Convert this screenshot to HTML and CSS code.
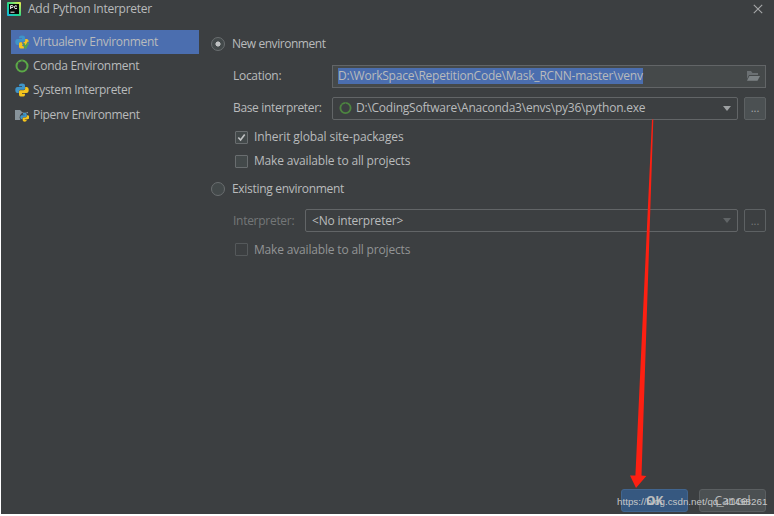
FILE: index.html
```html
<!DOCTYPE html>
<html lang="en">
<head>
<meta charset="utf-8">
<title>Add Python Interpreter</title>
<link rel="stylesheet" href="styles.css">
</head>
<body>
<svg class="defs" width="0" height="0">
  <defs>
    <symbol id="python" viewBox="0 0 14 14">
      <path fill="#3f94c8" d="M4 2.6Q4 .4 7 .4T10 2.6V5.4Q10 6.8 8.6 6.8H5.4Q3.8 6.8 3.8 8.5V10H2.6Q.3 10 .3 7T2.6 4H7V3.3H4Z"/>
      <path fill="#f5c51d" d="M10 11.4Q10 13.6 7 13.6T4 11.4V8.6Q4 7.2 5.4 7.2H8.6Q10.2 7.2 10.2 5.5V4H11.4Q13.7 4 13.7 7T11.4 10H7V10.7H10Z"/>
    </symbol>
    <symbol id="conda" viewBox="0 0 14 14">
      <circle cx="7" cy="7" r="5.5" fill="none" stroke="currentColor" stroke-width="2"/>
      <path d="M2.5 2.5 5 5M7 1v2" stroke="#3c3f41" stroke-width=".5"/>
    </symbol>
  </defs>
</svg>
<div class="dialog">
  <header class="titlebar">
    <svg class="app-icon" viewBox="0 0 14 14">
      <defs><linearGradient id="logo" x1="0" y1="1" x2="1" y2="0"><stop offset="0" stop-color="#12b5e8"/><stop offset=".45" stop-color="#21d789"/><stop offset="1" stop-color="#f4ee4c"/></linearGradient></defs>
      <rect width="14" height="14" rx="1" fill="url(#logo)"/>
      <rect x="2" y="2" width="10" height="10" fill="#080808"/>
      <path d="M3.6 7V3.6H5Q6.2 3.6 6.2 4.6T5 5.6H3.8M10 4.2Q7.4 2.8 7.4 5.2T10 6.3M3.5 10.2h4" fill="none" stroke="#eee" stroke-width="1"/>
    </svg>
    <h1 class="title">Add Python Interpreter</h1>
    <svg class="close" viewBox="0 0 10 10"><path d="M.8.8 9.2 9.2M9.2.8.8 9.2" stroke="#a6a8a9" stroke-width="1.1"/></svg>
  </header>
  <div class="content">
    <nav class="sidebar">
      <div class="nav-item selected">
        <svg class="icon" viewBox="0 0 14 14"><use href="#python"/><path d="M7.5 7.2 10 13 13.5 6.8" fill="none" stroke="#4b6eaf" stroke-width="1.6"/><path d="M8.8 8.2 10.6 12.8 13.3 8" fill="none" stroke="#55a847" stroke-width="1.7"/></svg>
        <span class="t-virtualenv">Virtualenv Environment</span>
      </div>
      <div class="nav-item"><svg class="icon conda"><use href="#conda"/></svg><span class="t-conda">Conda Environment</span></div>
      <div class="nav-item"><svg class="icon"><use href="#python"/></svg><span class="t-system">System Interpreter</span></div>
      <div class="nav-item">
        <svg class="icon" viewBox="0 0 14 14"><path d="M0 2H5L7 4H13V12H0Z" fill="#87939a"/><circle cx="9.7" cy="9.3" r="5" fill="#3c3f41"/><use href="#python" x="5" y="4.6" width="9.4" height="9.4"/></svg>
        <span class="t-pipenv">Pipenv Environment</span>
      </div>
    </nav>
    <main class="form">
      <div class="row radio-row"><span class="radio checked"></span><span class="t-new">New environment</span></div>
      <div class="row field-row location-row">
        <span class="label t-location">Location:</span>
        <div class="input"><span class="selection t-path">D:\WorkSpace\RepetitionCode\Mask_RCNN-master\venv</span>
          <svg class="folder" viewBox="0 0 14 12"><path d="M1 9V1H5L6.5 3H12V5H3Z" fill="#6b7073"/><path d="M3.4 6H14L11.5 10.8H1Z" fill="#7c8285"/></svg>
        </div>
      </div>
      <div class="row field-row base-row">
        <span class="label t-base">Base interpreter:</span>
        <div class="combo"><svg class="icon conda"><use href="#conda"/></svg><span class="t-exe">D:\CodingSoftware\Anaconda3\envs\py36\python.exe</span><i class="caret"></i></div>
        <button class="more">...</button>
      </div>
      <div class="row check-row"><span class="check"><svg viewBox="0 0 12 12"><path d="M2.5 6 5 8.8 9.5 2.8" fill="none" stroke="#c0c2c3" stroke-width="1.8"/></svg></span><span class="t-inherit">Inherit global site-packages</span></div>
      <div class="row check-row"><span class="check"></span><span class="t-make">Make available to all projects</span></div>
      <div class="row radio-row existing"><span class="radio"></span><span class="t-existing">Existing environment</span></div>
      <div class="row field-row interpreter-row">
        <span class="label t-interp">Interpreter:</span>
        <div class="combo"><span class="t-none">&lt;No interpreter&gt;</span><i class="caret"></i></div>
        <button class="more">...</button>
      </div>
      <div class="row check-row disabled"><span class="check"></span><span class="t-make">Make available to all projects</span></div>
    </main>
  </div>
  <footer class="actions"><button class="btn ok">OK</button><button class="btn cancel">Cancel</button></footer>
  <svg class="arrow" viewBox="0 0 774 516"><path d="M652 119.5H653.3L641.5 475.5L646.3 476L636 488L630 475.5L635.4 475.5Z" fill="#fd2012"/></svg>
  <div class="watermark">https://blog.csdn.net/qq_41498261</div>
</div>
</body>
</html>
```
FILE: styles.css
```css
* { box-sizing: border-box; }
body { margin: 0; width: 774px; height: 516px; overflow: hidden; background: #fff; font: 12px/18px "Open Sans", "Noto Sans", sans-serif; color: #b9bbbc; white-space: nowrap; }
.defs { position: absolute; }
.dialog { position: relative; display: flex; flex-direction: column; width: 773px; height: 514px; margin-left: 1px; background: #3c3f41; }
.titlebar { display: flex; align-items: center; height: 18px; padding: 0 11px 0 6px; }
.app-icon { width: 14px; height: 14px; margin-right: 7px; }
.title { margin: 0; font: inherit; flex: none; letter-spacing: -.25px; }
.close { width: 10px; height: 10px; margin-left: auto; }
.content { display: flex; flex: 1; }
.sidebar { width: 188px; margin: 12px 0 0 10px; }
.nav-item { display: flex; align-items: center; height: 24.2px; padding-left: 4px; gap: 4px; }
.selected { background: #4b6eaf; }
.icon { width: 14px; height: 14px; flex: none; }
.conda { color: #5ba947; }
.form { width: 555px; margin: 14px 0 0 12px; }
.row { display: flex; align-items: center; }
.radio-row { height: 24px; gap: 7px; }
.radio { width: 14px; height: 14px; border: 1px solid #6a6e70; border-radius: 50%; background: #43494a; }
.checked { background: radial-gradient(circle, #bfc1c2 0 2.2px, #43494a 2.9px); }
.field-row { height: 24px; padding-left: 22px; }
.label { width: 99px; flex: none; }
.location-row { margin-top: 8px; }
.base-row { margin-top: 8px; }
.input { display: flex; align-items: center; justify-content: space-between; width: 434px; height: 23px; padding: 0 5px; border: 1px solid #626567; background: #45494a; }
.selection { background: #4b6eaf; height: 16px; line-height: 16px; }
.folder { width: 14px; height: 12px; }
.combo { display: flex; align-items: center; flex: 1; height: 23px; padding: 0 6px; border: 1px solid #626567; border-radius: 2px; gap: 4px; }
.combo .conda { width: 13px; height: 14px; color: #4d8540; }
.caret { margin-left: auto; border: 4.5px solid transparent; border-top: 5px solid #9da0a2; border-bottom: 0; }
.more { width: 22px; height: 23px; margin-left: 6px; padding: 0; font: inherit; font-size: 11px; color: #aaa; background: #4b5052; border: 1px solid #5d6163; border-radius: 2px; }
.check-row { height: 24.3px; padding-left: 24px; gap: 6px; }
.base-row + .check-row { margin-top: 5px; }
.check { width: 13px; height: 13px; border: 1px solid #696d6f; border-radius: 1px; background: #43494a; }
.check svg { display: block; width: 11px; height: 11px; }
.existing { margin-top: 3px; }
.interpreter-row { margin-top: 8px; }
.interpreter-row .label { width: 72px; color: #747778; }
.interpreter-row .caret { border-top-color: #606466; }
.interpreter-row .more { background: transparent; color: #76797a; }
.disabled { margin-top: 5px; color: #929495; }
.disabled .check { background: transparent; border-color: #55595b; }
.t-virtualenv, .t-conda, .t-existing, .t-location { letter-spacing: -.3px; }
.t-system, .t-pipenv, .t-base { letter-spacing: -.34px; }
.t-new { letter-spacing: -.45px; }
.t-path { letter-spacing: -.22px; }
.t-exe { letter-spacing: -.24px; }
.t-inherit { letter-spacing: -.1px; }
.t-make { letter-spacing: -.17px; }
.t-interp { letter-spacing: -.28px; }
.t-none { letter-spacing: -.2px; }
.actions { display: flex; justify-content: flex-end; gap: 11px; padding: 0 8px 2px 0; }
.btn { width: 67px; height: 23px; padding: 0; font: inherit; letter-spacing: -.2px; color: #b9bbbc; border-radius: 3px; border: 1px solid #5b5f61; background: #4b5052; }
.ok { font-weight: 700; background: #365880; border-color: #41658f; }
.arrow { position: absolute; left: -1px; top: 0; width: 774px; height: 516px; }
.watermark { position: absolute; left: 616px; top: 493px; font: 9.8px/18px "Liberation Sans", sans-serif; color: #c5c7c8; }
```
